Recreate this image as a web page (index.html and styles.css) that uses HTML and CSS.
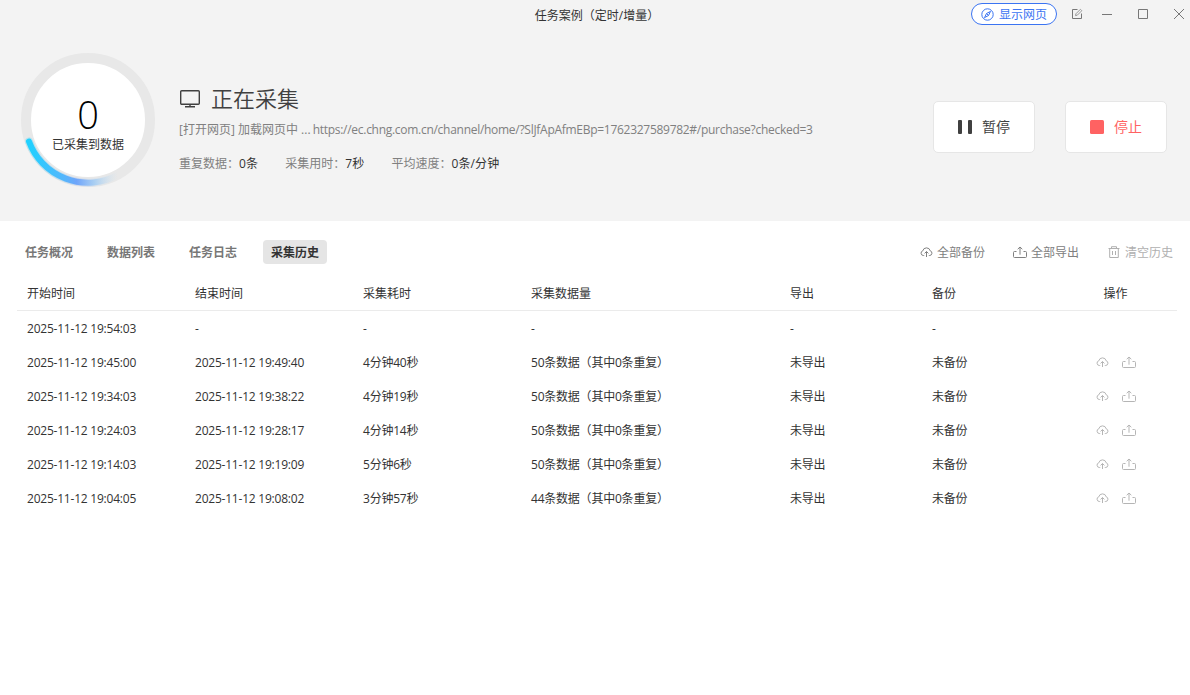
FILE: index.html
```
<!DOCTYPE html>
<html lang="zh-CN">
    <head>
        <meta charset="UTF-8">
        <title>任务案例</title>
        <link rel="stylesheet" href="styles.css">
    </head>
    <body>
        <svg class="defs" width="0" height="0">
            <symbol id="cloud" viewBox="0 0 13 12">
                <path d="M4.2 9.5H3.3a2.4 2.4 0 0 1-.5-4.7 3.8 3.8 0 0 1 7.4 0 2.4 2.4 0 0 1-.5 4.7H8.8M6.5 11V5.6M4.6 7.4l1.9-1.9 1.9 1.9"/>
            </symbol>
            <symbol id="export" viewBox="0 0 14 12">
                <path d="M3.5 5.5H1.5q-1 0-1 1v4q0 1 1 1h11q1 0 1-1v-4q0-1-1-1H10.5M7 8.7V1M4.7 3.2L7 1l2.3 2.2"/>
            </symbol>
        </svg>

        <header class="top">
            <div class="titlebar">
                <div class="title">任务案例（定时/增量）</div>
                <div class="window-tools">
                    <button class="show-page">
                        <svg width="13" height="13" viewBox="0 0 13 13"><circle cx="6.5" cy="6.5" r="5.7"/><path d="M9.5 3.4L7.5 7.5 3.5 9.6 5.5 5.5zM5.5 5.5l2 2"/></svg>
                        <span>显示网页</span>
                    </button>
                    <svg class="edit" width="12" height="12" viewBox="0 0 12 12"><path d="M6.5 1.5h-5v9h9V5.5"/><path class="pen" d="M4.5 7.6l.4-1.8L9.4 1.3l1.4 1.4-4.5 4.5z"/></svg>
                    <svg class="min" width="12" height="12" viewBox="0 0 12 12"><path d="M1 6.5h10"/></svg>
                    <svg class="max" width="12" height="12" viewBox="0 0 12 12"><path d="M1.5 1.5h9v9h-9z"/></svg>
                    <svg class="close" width="12" height="12" viewBox="0 0 12 12"><path d="M1 1l10 10M11 1L1 11"/></svg>
                </div>
            </div>

            <div class="status">
                <div class="gauge">
                    <svg class="ring" width="136" height="136" viewBox="0 0 136 136">
                        <defs>
                            <linearGradient id="arc" gradientUnits="userSpaceOnUse" x1="8" y1="0" x2="98" y2="0">
                                <stop offset="0" stop-color="#1fd1ff"/>
                                <stop offset=".4" stop-color="#55b6fc"/>
                                <stop offset=".54" stop-color="#6fa5fa"/>
                                <stop offset=".74" stop-color="#a5cdf3" stop-opacity=".9"/>
                                <stop offset="1" stop-color="#d5e5ee" stop-opacity="0"/>
                            </linearGradient>
                        </defs>
                        <circle cx="68" cy="68" r="62" fill="#fff" stroke="#e8e8e8" stroke-width="10"/>
                        <path class="glow" d="M9 89.5A62.8 62.8 0 0 0 98 123"/>
                        <path class="arc" d="M9 89.5A62.8 62.8 0 0 0 98 123"/>
                    </svg>
                    <div class="total">
                        <div class="count">0</div>
                        <div class="label">已采集到数据</div>
                    </div>
                </div>

                <div class="info">
                    <div class="state">
                        <svg width="22" height="20" viewBox="0 0 22 20"><rect x="1.7" y="1.7" width="18.6" height="13.6" rx="1"/><path d="M11 15.3v2.2M6 17.7h10"/></svg>
                        <span>正在采集</span>
                    </div>
                    <div class="address">[打开网页] 加载网页中 ... <span class="url">https://ec.chng.com.cn/channel/home/?SlJfApAfmEBp=1762327589782#/purchase?checked=3</span></div>
                    <div class="stats">
                        <div>重复数据：<b>0条</b></div>
                        <div>采集用时：<b>7秒</b></div>
                        <div>平均速度：<b>0条/分钟</b></div>
                    </div>
                </div>

                <div class="controls">
                    <button class="control"><svg width="14" height="14"><rect width="4" height="14" rx="1"/><rect x="10" width="4" height="14" rx="1"/></svg>暂停</button>
                    <button class="control stop"><svg width="14" height="14"><rect width="14" height="14" rx="1.5"/></svg>停止</button>
                </div>
            </div>
        </header>

        <main>
            <div class="toolbar">
                <nav class="tabs">
                    <a>任务概况</a>
                    <a>数据列表</a>
                    <a>任务日志</a>
                    <a class="active">采集历史</a>
                </nav>
                <div class="actions">
                    <a><svg width="13" height="12"><use href="#cloud"/></svg>全部备份</a>
                    <a><svg width="14" height="12"><use href="#export"/></svg>全部导出</a>
                    <a class="disabled"><svg width="12" height="12" viewBox="0 0 12 12"><path d="M.5 2.5h11M3.5 2V.7h5V2M1.7 2.5v9h8.6v-9M4.5 5v4M7.5 5v4"/></svg>清空历史</a>
                </div>
            </div>

            <table>
                <thead>
                    <tr><th class="time">开始时间</th><th class="time">结束时间</th><th class="time">采集耗时</th><th class="amount">采集数据量</th><th class="exported">导出</th><th class="backup">备份</th><th class="ops">操作</th></tr>
                </thead>
                <tbody>
                    <tr><td>2025-11-12 19:54:03</td><td>-</td><td>-</td><td>-</td><td>-</td><td>-</td><td></td></tr>
                    <tr><td>2025-11-12 19:45:00</td><td>2025-11-12 19:49:40</td><td>4分钟40秒</td><td>50条数据（其中0条重复）</td><td>未导出</td><td>未备份</td><td class="ops"><svg width="13" height="12"><use href="#cloud"/></svg><svg width="14" height="12"><use href="#export"/></svg></td></tr>
                    <tr><td>2025-11-12 19:34:03</td><td>2025-11-12 19:38:22</td><td>4分钟19秒</td><td>50条数据（其中0条重复）</td><td>未导出</td><td>未备份</td><td class="ops"><svg width="13" height="12"><use href="#cloud"/></svg><svg width="14" height="12"><use href="#export"/></svg></td></tr>
                    <tr><td>2025-11-12 19:24:03</td><td>2025-11-12 19:28:17</td><td>4分钟14秒</td><td>50条数据（其中0条重复）</td><td>未导出</td><td>未备份</td><td class="ops"><svg width="13" height="12"><use href="#cloud"/></svg><svg width="14" height="12"><use href="#export"/></svg></td></tr>
                    <tr><td>2025-11-12 19:14:03</td><td>2025-11-12 19:19:09</td><td>5分钟6秒</td><td>50条数据（其中0条重复）</td><td>未导出</td><td>未备份</td><td class="ops"><svg width="13" height="12"><use href="#cloud"/></svg><svg width="14" height="12"><use href="#export"/></svg></td></tr>
                    <tr><td>2025-11-12 19:04:05</td><td>2025-11-12 19:08:02</td><td>3分钟57秒</td><td>44条数据（其中0条重复）</td><td>未导出</td><td>未备份</td><td class="ops"><svg width="13" height="12"><use href="#cloud"/></svg><svg width="14" height="12"><use href="#export"/></svg></td></tr>
                </tbody>
            </table>
        </main>
    </body>
</html>
```
FILE: styles.css
```
* {
    box-sizing: border-box;
}

html, body {
    height: 100%;
}

body {
    margin: 0;
    overflow: hidden;
    background: #fff;
    color: #333;
    font: 12px/18px "Open Sans", "Noto Sans CJK SC", sans-serif;
}

svg {
    display: block;
    flex: none;
    fill: none;
    stroke: currentColor;
}

button {
    font: inherit;
}

.defs {
    position: absolute;
}

.top {
    height: 221px;
    background: #f3f3f3;
}

/* title bar */

.titlebar {
    display: grid;
    grid-template-columns: 1fr auto 1fr;
    align-items: center;
    height: 28px;
}

.title {
    grid-column: 2;
    padding: 4px 0 0 4px;
}

.window-tools {
    display: flex;
    justify-content: flex-end;
    align-items: center;
    padding-right: 5px;
    color: #777;
}

.show-page {
    display: flex;
    align-items: center;
    gap: 5px;
    width: 86px;
    height: 22px;
    margin-right: 14px;
    padding: 0 0 0 9px;
    border: 1px solid #3b74f2;
    border-radius: 11px;
    background: #fff;
    color: #3b74f2;
}

.show-page span {
    padding-top: 2px;
}

.edit {
    margin-right: 18px;
}

.pen {
    stroke: #999;
}

.min, .max {
    margin-right: 24px;
}

/* running status */

.status {
    display: flex;
    padding: 24px 23px 0 20px;
}

.gauge {
    display: grid;
    width: 136px;
    height: 136px;
    text-align: center;
    color: #000;
}

.gauge > * {
    grid-area: 1 / 1;
}

.arc, .glow {
    stroke: url(#arc);
    stroke-width: 6;
    stroke-linecap: round;
}

.glow {
    stroke-width: 8;
    opacity: .25;
}

.total {
    padding-top: 42px;
}

.count {
    height: 42px;
    font-size: 38px;
    font-weight: 350;
    line-height: 40px;
}

.label {
    color: #333;
}

.info {
    flex: 1;
    padding: 31px 0 0 23px;
    color: #808080;
}

.state {
    display: flex;
    align-items: center;
    gap: 10px;
    height: 30px;
    color: #404040;
    font-size: 22px;
    font-weight: 350;
}

.state svg {
    margin-top: 2px;
    stroke-width: 1.4;
}

.address {
    margin-top: 8px;
    white-space: nowrap;
}

.url {
    margin-left: -1px;
    letter-spacing: -.282px;
}

.stats {
    display: flex;
    gap: 27px;
    margin-top: 16px;
}

.stats b {
    color: #333;
    font-weight: 400;
    letter-spacing: .15px;
}

.controls {
    display: flex;
    gap: 30px;
    padding-top: 49px;
}

.control {
    display: flex;
    justify-content: center;
    align-items: center;
    gap: 10px;
    width: 102px;
    height: 52px;
    border: 1px solid #e6e6e6;
    border-radius: 5px;
    background: #fff;
    color: #404040;
    font-size: 14px;
}

.control svg {
    fill: currentColor;
    stroke: none;
}

.stop {
    color: #ff6262;
}

/* tabs and actions */

.toolbar {
    display: flex;
    justify-content: space-between;
    align-items: center;
    padding: 19px 17px 0;
}

.tabs {
    display: flex;
    gap: 18px;
    color: #777;
    font-weight: 700;
}

.tabs a {
    padding: 4px 8px 2px;
    border-radius: 4px;
}

.tabs .active {
    background: #e5e5e5;
    color: #333;
}

.actions {
    display: flex;
    gap: 28px;
    color: #808080;
}

.actions a {
    display: flex;
    align-items: center;
    gap: 4px;
    padding-top: 2px;
}

.actions svg {
    margin-top: -2px;
}

.actions .disabled {
    gap: 5px;
    margin-left: 1px;
    color: #b0b0b0;
}

/* history */

table {
    width: 1160px;
    margin: 12px 0 0 17px;
    border-collapse: collapse;
    table-layout: fixed;
}

th, td {
    height: 34px;
    padding: 4px 10px 0;
    font-weight: 400;
    text-align: left;
    white-space: nowrap;
}

thead th {
    padding-top: 3px;
    border-bottom: 1px solid #ebebeb;
}

td {
    letter-spacing: -.22px;
}

.time {
    width: 168px;
}

.amount {
    width: 259px;
}

.exported {
    width: 142px;
}

.backup {
    width: 132px;
}

th.ops {
    text-align: center;
}

td.ops {
    padding: 0 0 0 42px;
    color: #b5b5b5;
}

td.ops svg {
    display: inline-block;
    margin-right: 13px;
    vertical-align: middle;
}
```
